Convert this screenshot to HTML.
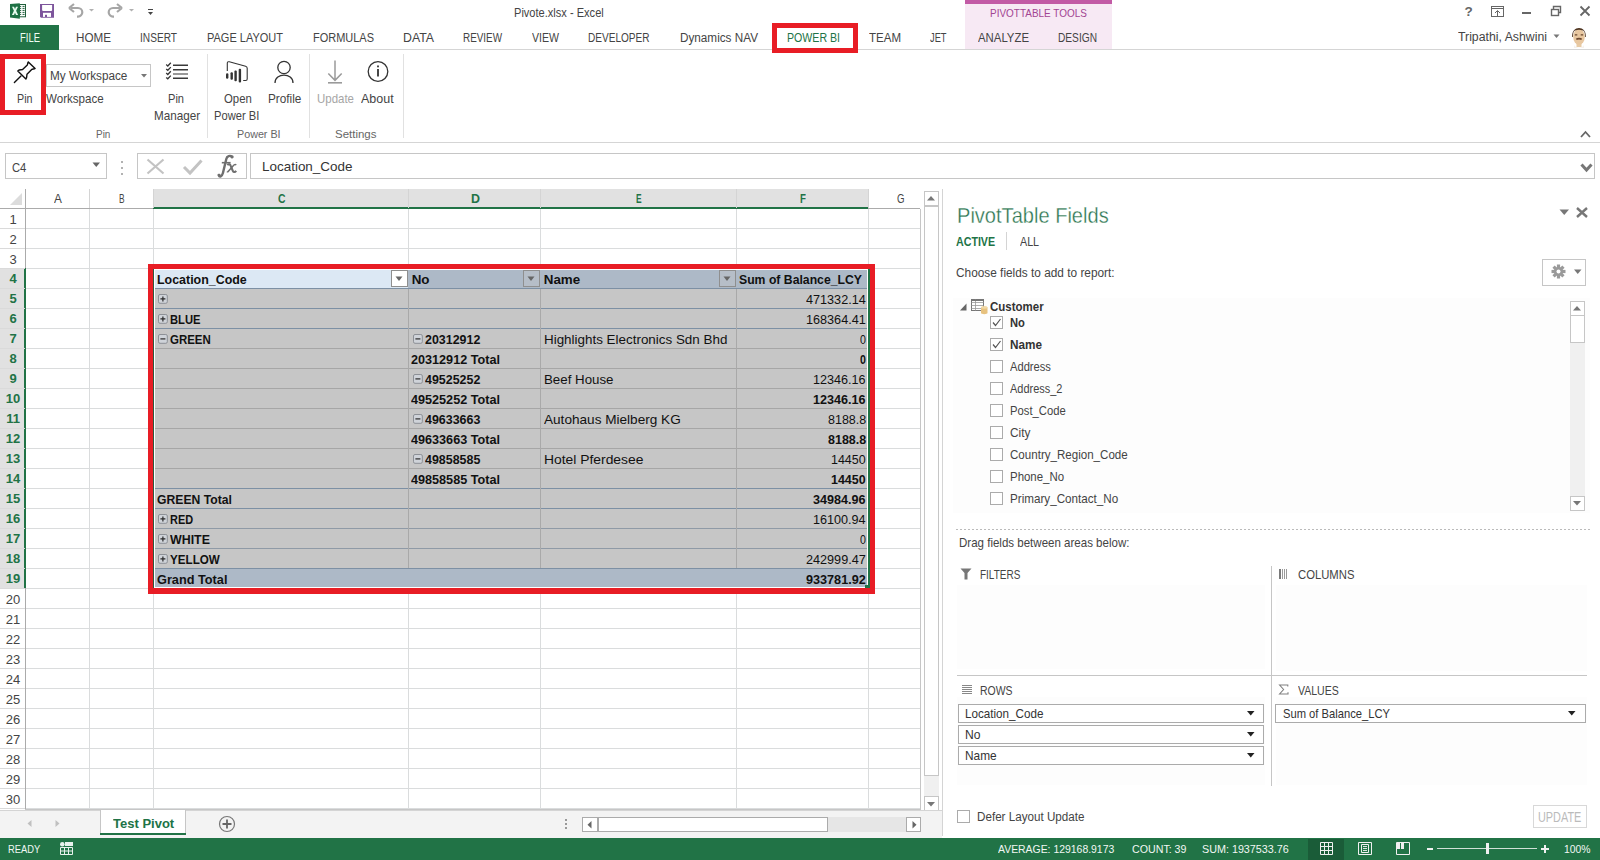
<!DOCTYPE html>
<html><head><meta charset="utf-8"><style>
html,body{margin:0;padding:0;width:1600px;height:860px;overflow:hidden;background:#fff;position:relative}
body{font-family:"Liberation Sans",sans-serif}
.t{position:absolute;white-space:nowrap;transform-origin:0 0;font-family:"Liberation Sans",sans-serif}
.r{position:absolute;display:block}
</style></head><body>
<div class="t" style="left:513.70px;top:7.00px;font-size:12.43px;line-height:12.43px;font-weight:normal;color:#444;transform:scaleX(0.8907);">Pivote.xlsx - Excel</div>
<svg class="r" style="left:9px;top:2px" width="19" height="18" viewBox="9 2 19 18">
<rect x="19.5" y="4.5" width="6" height="12.3" fill="#fff" stroke="#1f5f3b" stroke-width="1"/>
<path d="M20 6.4 H21.2 M22.5 6.4 H24.6 M20 8.4 H21.2 M22.5 8.4 H24.6 M20 10.4 H21.2 M22.5 10.4 H24.6 M20 12.4 H21.2 M22.5 12.4 H24.6 M20 14.4 H21.2 M22.5 14.4 H24.6" stroke="#1f5f3b" stroke-width="1"/>
<path d="M10 4 L19.8 3.2 V18.7 L10 17.5 Z" fill="#1e7145"/>
<path d="M12 6.7 H14 L15 8.9 L16 6.7 H18 L16.1 10.8 L18.1 14.9 H16 L15 12.7 L14 14.9 H11.9 L13.9 10.8 Z" fill="#e8fbef"/>
</svg>
<svg class="r" style="left:40px;top:4px" width="14" height="14" viewBox="40 4 14 14">
<path d="M40 4 H54 V17.8 H41 L40 16.8 Z" fill="#7d559c"/>
<path d="M42.1 5 H52.1 V10 Q52.1 11 51.1 11 H43.1 Q42.1 11 42.1 10 Z" fill="#fff"/>
<rect x="43" y="12.8" width="8" height="4.1" fill="#fff"/>
<rect x="45" y="14.8" width="2" height="2.2" fill="#7d559c"/>
</svg>
<svg class="r" style="left:68px;top:3px" width="70" height="16" viewBox="0 0 70 16">
<path d="M3 5 H10 A4.3 4.3 0 0 1 10 13.6 H9" fill="none" stroke="#a6a6a6" stroke-width="2.2"/>
<path d="M1 5 L6 1 M1 5 L6 9" fill="none" stroke="#a6a6a6" stroke-width="2.2"/>
<path d="M21 6 L26 6 L23.5 8.6 Z" fill="#b0b0b0"/>
<path d="M52 5 H45 A4.3 4.3 0 0 0 45 13.6 H46" fill="none" stroke="#a6a6a6" stroke-width="2.2"/>
<path d="M54 5 L49 1 M54 5 L49 9" fill="none" stroke="#a6a6a6" stroke-width="2.2"/>
<path d="M61 6 L66 6 L63.5 8.6 Z" fill="#b0b0b0"/>
</svg>
<svg class="r" style="left:147px;top:8px" width="8" height="8" viewBox="0 0 8 8">
<rect x="1" y="1" width="5" height="1" fill="#444"/><path d="M1 4 H6 L3.5 7 Z" fill="#444"/></svg>
<svg class="r" style="left:1460px;top:4px" width="135" height="16" viewBox="0 0 135 16">
<text x="4.5" y="12" font-family="Liberation Sans" font-weight="bold" font-size="13.5" fill="#666">?</text>
<rect x="31.5" y="2.5" width="12" height="10" fill="none" stroke="#666" stroke-width="1"/>
<path d="M31.5 4.5 H43.5" stroke="#666"/>
<path d="M37.5 12 V7 M35 9 L37.5 6.5 L40 9" fill="none" stroke="#666" stroke-width="1"/>
<rect x="62" y="8" width="9" height="2" fill="#666"/>
<rect x="91.5" y="5.5" width="7" height="6" fill="none" stroke="#666" stroke-width="1.4"/>
<path d="M93.5 5.5 V2.5 H100.5 V8.5 H98.5" fill="none" stroke="#666" stroke-width="1.4"/>
<path d="M120.5 2.5 L129.5 11.5 M129.5 2.5 L120.5 11.5" stroke="#666" stroke-width="1.8"/>
</svg>
<div class="r" style="left:0px;top:49px;width:1600px;height:1px;background:#d5d5d5"></div>
<div class="r" style="left:965px;top:0px;width:147px;height:49px;background:#f7e9f4"></div>
<div class="r" style="left:965px;top:0px;width:147px;height:4px;background:#c25aa5"></div>
<div class="t" style="left:990.00px;top:8.00px;font-size:10.90px;line-height:10.90px;font-weight:normal;color:#a24592;transform:scaleX(0.9150);">PIVOTTABLE TOOLS</div>
<div class="r" style="left:0px;top:25px;width:59px;height:25px;background:#217346"></div>
<div class="t" style="left:20.00px;top:31.00px;font-size:13.08px;line-height:13.08px;font-weight:normal;color:#f0fff4;transform:scaleX(0.7237);">FILE</div>
<div class="t" style="left:76.00px;top:31.00px;font-size:13.08px;line-height:13.08px;font-weight:normal;color:#444;transform:scaleX(0.8918);">HOME</div>
<div class="t" style="left:140.00px;top:31.00px;font-size:13.08px;line-height:13.08px;font-weight:normal;color:#444;transform:scaleX(0.7749);">INSERT</div>
<div class="t" style="left:207.00px;top:31.00px;font-size:13.08px;line-height:13.08px;font-weight:normal;color:#444;transform:scaleX(0.8408);">PAGE LAYOUT</div>
<div class="t" style="left:313.00px;top:31.00px;font-size:13.08px;line-height:13.08px;font-weight:normal;color:#444;transform:scaleX(0.8391);">FORMULAS</div>
<div class="t" style="left:403.00px;top:31.00px;font-size:13.08px;line-height:13.08px;font-weight:normal;color:#444;transform:scaleX(0.9404);">DATA</div>
<div class="t" style="left:463.00px;top:31.00px;font-size:13.08px;line-height:13.08px;font-weight:normal;color:#444;transform:scaleX(0.7557);">REVIEW</div>
<div class="t" style="left:532.00px;top:31.00px;font-size:13.08px;line-height:13.08px;font-weight:normal;color:#444;transform:scaleX(0.8078);">VIEW</div>
<div class="t" style="left:588.00px;top:31.00px;font-size:13.08px;line-height:13.08px;font-weight:normal;color:#444;transform:scaleX(0.7691);">DEVELOPER</div>
<div class="t" style="left:679.50px;top:31.00px;font-size:13.08px;line-height:13.08px;font-weight:normal;color:#444;transform:scaleX(0.8966);">Dynamics NAV</div>
<div class="t" style="left:787.00px;top:31.00px;font-size:13.08px;line-height:13.08px;font-weight:normal;color:#217346;transform:scaleX(0.8103);">POWER BI</div>
<div class="t" style="left:869.00px;top:31.00px;font-size:13.08px;line-height:13.08px;font-weight:normal;color:#444;transform:scaleX(0.8807);">TEAM</div>
<div class="t" style="left:929.50px;top:31.00px;font-size:13.08px;line-height:13.08px;font-weight:normal;color:#444;transform:scaleX(0.7096);">JET</div>
<div class="t" style="left:978.00px;top:31.00px;font-size:13.08px;line-height:13.08px;font-weight:normal;color:#444;transform:scaleX(0.8697);">ANALYZE</div>
<div class="t" style="left:1058.00px;top:31.00px;font-size:13.08px;line-height:13.08px;font-weight:normal;color:#444;transform:scaleX(0.7774);">DESIGN</div>
<div class="r" style="left:772px;top:23px;width:86px;height:30px;border:5px solid #e81d25;box-sizing:border-box"></div>
<div class="t" style="left:1458.00px;top:30.00px;font-size:13.08px;line-height:13.08px;font-weight:normal;color:#444;transform:scaleX(0.9391);">Tripathi, Ashwini</div>
<svg class="r" style="left:1553px;top:34px" width="8" height="5"><path d="M0.5 0.5 H6.5 L3.5 4 Z" fill="#777"/></svg>
<svg class="r" style="left:1570px;top:24px" width="18" height="25" viewBox="0 0 18 25">
<path d="M4 21 C6 24.5 12 24.5 14 21 L14 24 H4 Z" fill="#f6f2ee"/>
<rect x="6.5" y="18" width="5" height="5" fill="#e8cba6"/>
<ellipse cx="9" cy="12.8" rx="5.8" ry="8" fill="#e8c7a0"/>
<path d="M2.2 13 C1.2 1 16.8 1 15.8 13 L15 13 C15 9 14.5 7 13 6.5 C10 5.5 8 5.5 5 6.5 C3.5 7 3 9 3 13 Z" fill="#4e3421"/>
<path d="M4.8 10.8 H7.3 M10.7 10.8 H13.2" stroke="#6a4a30" stroke-width="1.3"/>
<path d="M6.3 15.3 C7.5 14.4 10.5 14.4 11.7 15.3" fill="none" stroke="#6e4a30" stroke-width="1.6"/>
</svg>
<div class="r" style="left:0px;top:142px;width:1600px;height:1px;background:#d5d5d5"></div>
<div class="r" style="left:207px;top:54px;width:1px;height:84px;background:#e1e1e1"></div>
<div class="r" style="left:309px;top:54px;width:1px;height:84px;background:#e1e1e1"></div>
<div class="r" style="left:403px;top:54px;width:1px;height:84px;background:#e1e1e1"></div>
<div class="r" style="left:0px;top:54px;width:46px;height:61px;border:5px solid #e81d25;box-sizing:border-box"></div>
<svg class="r" style="left:12px;top:59px" width="26" height="26" viewBox="12 59 26 26">
<path d="M14.4 82.6 L21 76" stroke="#111" stroke-width="1.4" stroke-linecap="round"/>
<path d="M17.8 70.9 C19.5 69.3 21 70 22.6 69.6 L27.3 64.9 C27.8 63.8 27.6 62.8 28.3 61.9 L35.1 68.5 C34.2 69.2 32.9 68.9 31.7 69.4 L27 74.2 C26.6 75.6 27.2 77.4 25.9 79 Z" fill="none" stroke="#111" stroke-width="1.4" stroke-linejoin="round"/>
</svg>
<div class="t" style="left:16.90px;top:93.00px;font-size:12.86px;line-height:12.86px;font-weight:normal;color:#444;transform:scaleX(0.8339);">Pin</div>
<div class="r" style="left:46px;top:64px;width:105px;height:23px;border:1px solid #c6c6c6;box-sizing:border-box;background:#fff"></div>
<div class="t" style="left:49.60px;top:69.00px;font-size:13.08px;line-height:13.08px;font-weight:normal;color:#444;transform:scaleX(0.8971);">My Workspace</div>
<svg class="r" style="left:141px;top:74px" width="6" height="4"><path d="M0 0 H6 L3 3.5 Z" fill="#777"/></svg>
<div class="t" style="left:46.40px;top:93.00px;font-size:12.86px;line-height:12.86px;font-weight:normal;color:#444;transform:scaleX(0.9003);">Workspace</div>
<svg class="r" style="left:160px;top:58px" width="32" height="26" viewBox="160 58 32 26">
<path d="M166.2 64.6 L167.8 66 L170.8 62.8 M166.2 68.9 L167.8 70.3 L170.8 67.1 M166.2 73.1 L167.8 74.5 L170.8 71.3 M166.2 77.4 L167.8 78.8 L170.8 75.6" fill="none" stroke="#333" stroke-width="1.3"/>
<path d="M173 65.3 H188 M173 69.8 H188 M173 78.3 H188" stroke="#3a3a3a" stroke-width="1.5"/>
<path d="M173 74 H188" stroke="#777" stroke-width="1.5"/>
</svg>
<div class="t" style="left:168.00px;top:93.00px;font-size:12.86px;line-height:12.86px;font-weight:normal;color:#444;transform:scaleX(0.8608);">Pin</div>
<div class="t" style="left:153.50px;top:110.00px;font-size:12.80px;line-height:12.80px;font-weight:normal;color:#444;transform:scaleX(0.9143);">Manager</div>
<div class="t" style="left:95.90px;top:129.00px;font-size:11.30px;line-height:11.30px;font-weight:normal;color:#666;transform:scaleX(0.8819);">Pin</div>
<svg class="r" style="left:222px;top:58px" width="30" height="28" viewBox="222 58 30 28">
<path d="M227.3 71 V63.3 Q227.3 61.3 229.3 61.8 L245.6 66.2 Q247.2 66.7 247.2 68.3 V79 Q247.2 80.5 245.7 80.5 H243.2" fill="none" stroke="#333" stroke-width="1.1"/>
<rect x="226" y="73.3" width="2.4" height="5.4" rx="1.2" fill="#333"/>
<rect x="230.5" y="72.2" width="2.4" height="7.5" rx="1" fill="#333"/>
<rect x="234.4" y="70.5" width="2.4" height="10.7" rx="1" fill="#333"/>
<rect x="238.7" y="68.8" width="2.4" height="13.8" rx="1" fill="#333"/>
</svg>
<div class="t" style="left:223.60px;top:93.00px;font-size:12.86px;line-height:12.86px;font-weight:normal;color:#444;transform:scaleX(0.8830);">Open</div>
<div class="t" style="left:214.40px;top:109.00px;font-size:13.08px;line-height:13.08px;font-weight:normal;color:#444;transform:scaleX(0.8535);">Power BI</div>
<svg class="r" style="left:273px;top:60px" width="22" height="24" viewBox="0 0 22 24">
<circle cx="11" cy="7.5" r="6.2" fill="none" stroke="#333" stroke-width="1.3"/>
<path d="M2 23 C2 12.5 20 12.5 20 23" fill="none" stroke="#333" stroke-width="1.3"/>
</svg>
<div class="t" style="left:267.60px;top:93.00px;font-size:12.86px;line-height:12.86px;font-weight:normal;color:#444;transform:scaleX(0.9159);">Profile</div>
<svg class="r" style="left:325px;top:58px" width="20" height="28" viewBox="325 58 20 28">
<path d="M335 60.5 V80.3 M328.3 73.4 L335 80.3 L341.7 73.4" fill="none" stroke="#9a9a9a" stroke-width="1.5"/>
<rect x="328" y="82" width="14" height="1.6" fill="#9a9a9a"/>
</svg>
<div class="t" style="left:316.80px;top:93.00px;font-size:12.86px;line-height:12.86px;font-weight:normal;color:#a6a6a6;transform:scaleX(0.8919);">Update</div>
<svg class="r" style="left:366px;top:60px" width="24" height="24" viewBox="0 0 24 24">
<circle cx="12" cy="11.5" r="9.8" fill="none" stroke="#333" stroke-width="1.3"/>
<rect x="11.1" y="9" width="1.8" height="7.5" fill="#333"/><rect x="11.1" y="5.5" width="1.8" height="1.8" fill="#333"/>
</svg>
<div class="t" style="left:361.40px;top:93.00px;font-size:12.86px;line-height:12.86px;font-weight:normal;color:#444;transform:scaleX(0.9701);">About</div>
<div class="t" style="left:236.70px;top:129.00px;font-size:11.30px;line-height:11.30px;font-weight:normal;color:#666;transform:scaleX(0.9509);">Power BI</div>
<div class="t" style="left:335.00px;top:129.00px;font-size:11.30px;line-height:11.30px;font-weight:normal;color:#666;transform:scaleX(1.0166);">Settings</div>
<svg class="r" style="left:1580px;top:130px" width="11" height="8"><path d="M1 7 L5.5 2 L10 7" fill="none" stroke="#666" stroke-width="1.8"/></svg>
<div class="r" style="left:5px;top:153px;width:102px;height:26px;border:1px solid #c6c6c6;box-sizing:border-box"></div>
<div class="t" style="left:12.25px;top:162.00px;font-size:11.99px;line-height:11.99px;font-weight:normal;color:#444;transform:scaleX(0.9367);">C4</div>
<svg class="r" style="left:92px;top:162px" width="9" height="6"><path d="M0.5 0.5 H8 L4.25 5 Z" fill="#666"/></svg>
<svg class="r" style="left:120px;top:160px" width="4" height="16"><circle cx="2" cy="2" r="1" fill="#999"/><circle cx="2" cy="8" r="1" fill="#999"/><circle cx="2" cy="14" r="1" fill="#999"/></svg>
<div class="r" style="left:137px;top:153px;width:110px;height:26px;border:1px solid #c6c6c6;box-sizing:border-box"></div>
<svg class="r" style="left:146px;top:158px" width="92" height="20" viewBox="0 0 92 20">
<path d="M1.5 1.5 L17.5 15.5 M17.5 1.5 L1.5 15.5" stroke="#c3c3c3" stroke-width="2.2"/>
<path d="M38 9 L44 15 L55.5 2.5" fill="none" stroke="#c3c3c3" stroke-width="3"/>
</svg>
<svg class="r" style="left:214px;top:152px" width="26" height="27" viewBox="214 152 26 27">
<path d="M218.6 175 C219.5 177.3 222 176.8 223 172.8 L226.3 159 C227 155.8 230 155.2 232.4 156.6" fill="none" stroke="#6f6f6f" stroke-width="2.4" stroke-linecap="round"/>
<circle cx="219.3" cy="175" r="1.3" fill="#6f6f6f"/><circle cx="232" cy="157.2" r="1.3" fill="#6f6f6f"/>
<path d="M221.8 162.7 H230.6" stroke="#6f6f6f" stroke-width="1.6"/>
<path d="M227.3 165 C229 163.5 230.2 164.2 231 166.5 L232.8 170.8 C233.6 172.6 235 172.3 236.2 170.8" fill="none" stroke="#6f6f6f" stroke-width="2.1"/>
<path d="M236.3 165 C235 164 234 164.8 233 166 L228.6 171 C228 171.8 227.5 172 227 171.5" fill="none" stroke="#6f6f6f" stroke-width="1.5"/>
</svg>
<div class="r" style="left:250px;top:153px;width:1345px;height:26px;border:1px solid #c6c6c6;box-sizing:border-box"></div>
<div class="t" style="left:262.00px;top:160.00px;font-size:13.44px;line-height:13.44px;font-weight:normal;color:#333;transform:scaleX(1.0005);">Location_Code</div>
<svg class="r" style="left:1580px;top:163px" width="13" height="10"><path d="M1.5 1.5 L6.5 7 L11.5 1.5" fill="none" stroke="#777" stroke-width="3"/></svg>
<div class="r" style="left:153px;top:189px;width:715px;height:18px;background:#e1e1e1"></div>
<div class="r" style="left:153px;top:207px;width:715px;height:2px;background:#217346"></div>
<div class="r" style="left:0px;top:208px;width:153px;height:1px;background:#ababab"></div>
<div class="r" style="left:868px;top:208px;width:52px;height:1px;background:#ababab"></div>
<div class="r" style="left:25px;top:228px;width:895px;height:1px;background:#dadcdd"></div>
<div class="r" style="left:25px;top:248px;width:895px;height:1px;background:#dadcdd"></div>
<div class="r" style="left:25px;top:268px;width:895px;height:1px;background:#dadcdd"></div>
<div class="r" style="left:25px;top:288px;width:895px;height:1px;background:#dadcdd"></div>
<div class="r" style="left:25px;top:308px;width:895px;height:1px;background:#dadcdd"></div>
<div class="r" style="left:25px;top:328px;width:895px;height:1px;background:#dadcdd"></div>
<div class="r" style="left:25px;top:348px;width:895px;height:1px;background:#dadcdd"></div>
<div class="r" style="left:25px;top:368px;width:895px;height:1px;background:#dadcdd"></div>
<div class="r" style="left:25px;top:388px;width:895px;height:1px;background:#dadcdd"></div>
<div class="r" style="left:25px;top:408px;width:895px;height:1px;background:#dadcdd"></div>
<div class="r" style="left:25px;top:428px;width:895px;height:1px;background:#dadcdd"></div>
<div class="r" style="left:25px;top:448px;width:895px;height:1px;background:#dadcdd"></div>
<div class="r" style="left:25px;top:468px;width:895px;height:1px;background:#dadcdd"></div>
<div class="r" style="left:25px;top:488px;width:895px;height:1px;background:#dadcdd"></div>
<div class="r" style="left:25px;top:508px;width:895px;height:1px;background:#dadcdd"></div>
<div class="r" style="left:25px;top:528px;width:895px;height:1px;background:#dadcdd"></div>
<div class="r" style="left:25px;top:548px;width:895px;height:1px;background:#dadcdd"></div>
<div class="r" style="left:25px;top:568px;width:895px;height:1px;background:#dadcdd"></div>
<div class="r" style="left:25px;top:588px;width:895px;height:1px;background:#dadcdd"></div>
<div class="r" style="left:25px;top:608px;width:895px;height:1px;background:#dadcdd"></div>
<div class="r" style="left:25px;top:628px;width:895px;height:1px;background:#dadcdd"></div>
<div class="r" style="left:25px;top:648px;width:895px;height:1px;background:#dadcdd"></div>
<div class="r" style="left:25px;top:668px;width:895px;height:1px;background:#dadcdd"></div>
<div class="r" style="left:25px;top:688px;width:895px;height:1px;background:#dadcdd"></div>
<div class="r" style="left:25px;top:708px;width:895px;height:1px;background:#dadcdd"></div>
<div class="r" style="left:25px;top:728px;width:895px;height:1px;background:#dadcdd"></div>
<div class="r" style="left:25px;top:748px;width:895px;height:1px;background:#dadcdd"></div>
<div class="r" style="left:25px;top:768px;width:895px;height:1px;background:#dadcdd"></div>
<div class="r" style="left:25px;top:788px;width:895px;height:1px;background:#dadcdd"></div>
<div class="r" style="left:25px;top:808px;width:895px;height:1px;background:#dadcdd"></div>
<div class="r" style="left:89px;top:189px;width:1px;height:19px;background:#d4d4d4"></div>
<div class="r" style="left:89px;top:209px;width:1px;height:600px;background:#dadcdd"></div>
<div class="r" style="left:153px;top:189px;width:1px;height:19px;background:#d4d4d4"></div>
<div class="r" style="left:153px;top:209px;width:1px;height:600px;background:#dadcdd"></div>
<div class="r" style="left:408px;top:189px;width:1px;height:19px;background:#d4d4d4"></div>
<div class="r" style="left:408px;top:209px;width:1px;height:600px;background:#dadcdd"></div>
<div class="r" style="left:540px;top:189px;width:1px;height:19px;background:#d4d4d4"></div>
<div class="r" style="left:540px;top:209px;width:1px;height:600px;background:#dadcdd"></div>
<div class="r" style="left:736px;top:189px;width:1px;height:19px;background:#d4d4d4"></div>
<div class="r" style="left:736px;top:209px;width:1px;height:600px;background:#dadcdd"></div>
<div class="r" style="left:868px;top:189px;width:1px;height:19px;background:#d4d4d4"></div>
<div class="r" style="left:868px;top:209px;width:1px;height:600px;background:#dadcdd"></div>
<div class="r" style="left:920px;top:209px;width:1px;height:601px;background:#c6c6c6"></div>
<div class="r" style="left:25px;top:809px;width:896px;height:1px;background:#c6c6c6"></div>
<div class="r" style="left:0px;top:268px;width:25px;height:320px;background:#e1e1e1"></div>
<div class="r" style="left:25px;top:189px;width:1px;height:620px;background:#ababab"></div>
<div class="r" style="left:24px;top:268px;width:2px;height:320px;background:#217346"></div>
<div class="r" style="left:0px;top:228px;width:25px;height:1px;background:#dadada"></div>
<div class="r" style="left:0px;top:248px;width:25px;height:1px;background:#dadada"></div>
<div class="r" style="left:0px;top:268px;width:25px;height:1px;background:#dadada"></div>
<div class="r" style="left:0px;top:288px;width:25px;height:1px;background:#dadada"></div>
<div class="r" style="left:0px;top:308px;width:25px;height:1px;background:#dadada"></div>
<div class="r" style="left:0px;top:328px;width:25px;height:1px;background:#dadada"></div>
<div class="r" style="left:0px;top:348px;width:25px;height:1px;background:#dadada"></div>
<div class="r" style="left:0px;top:368px;width:25px;height:1px;background:#dadada"></div>
<div class="r" style="left:0px;top:388px;width:25px;height:1px;background:#dadada"></div>
<div class="r" style="left:0px;top:408px;width:25px;height:1px;background:#dadada"></div>
<div class="r" style="left:0px;top:428px;width:25px;height:1px;background:#dadada"></div>
<div class="r" style="left:0px;top:448px;width:25px;height:1px;background:#dadada"></div>
<div class="r" style="left:0px;top:468px;width:25px;height:1px;background:#dadada"></div>
<div class="r" style="left:0px;top:488px;width:25px;height:1px;background:#dadada"></div>
<div class="r" style="left:0px;top:508px;width:25px;height:1px;background:#dadada"></div>
<div class="r" style="left:0px;top:528px;width:25px;height:1px;background:#dadada"></div>
<div class="r" style="left:0px;top:548px;width:25px;height:1px;background:#dadada"></div>
<div class="r" style="left:0px;top:568px;width:25px;height:1px;background:#dadada"></div>
<div class="r" style="left:0px;top:588px;width:25px;height:1px;background:#dadada"></div>
<div class="r" style="left:0px;top:608px;width:25px;height:1px;background:#dadada"></div>
<div class="r" style="left:0px;top:628px;width:25px;height:1px;background:#dadada"></div>
<div class="r" style="left:0px;top:648px;width:25px;height:1px;background:#dadada"></div>
<div class="r" style="left:0px;top:668px;width:25px;height:1px;background:#dadada"></div>
<div class="r" style="left:0px;top:688px;width:25px;height:1px;background:#dadada"></div>
<div class="r" style="left:0px;top:708px;width:25px;height:1px;background:#dadada"></div>
<div class="r" style="left:0px;top:728px;width:25px;height:1px;background:#dadada"></div>
<div class="r" style="left:0px;top:748px;width:25px;height:1px;background:#dadada"></div>
<div class="r" style="left:0px;top:768px;width:25px;height:1px;background:#dadada"></div>
<div class="r" style="left:0px;top:788px;width:25px;height:1px;background:#dadada"></div>
<div class="r" style="left:0px;top:808px;width:25px;height:1px;background:#dadada"></div>
<svg class="r" style="left:10px;top:193px" width="13" height="12"><path d="M12 0 V12 H0 Z" fill="#dcdcdc"/></svg>
<div class="t" style="left:54.00px;top:192.00px;font-size:13.00px;line-height:13.00px;font-weight:normal;color:#444;transform:scaleX(0.9104);">A</div>
<div class="t" style="left:118.70px;top:192.00px;font-size:13.00px;line-height:13.00px;font-weight:normal;color:#444;transform:scaleX(0.6453);">B</div>
<div class="t" style="left:277.50px;top:192.00px;font-size:13.00px;line-height:13.00px;font-weight:bold;color:#217346;transform:scaleX(0.7985);">C</div>
<div class="t" style="left:471.00px;top:192.00px;font-size:13.00px;line-height:13.00px;font-weight:bold;color:#217346;transform:scaleX(0.9582);">D</div>
<div class="t" style="left:636.00px;top:192.00px;font-size:13.00px;line-height:13.00px;font-weight:bold;color:#217346;transform:scaleX(0.6453);">E</div>
<div class="t" style="left:800.00px;top:192.00px;font-size:13.00px;line-height:13.00px;font-weight:bold;color:#217346;transform:scaleX(0.7440);">F</div>
<div class="t" style="left:897.00px;top:192.00px;font-size:13.00px;line-height:13.00px;font-weight:normal;color:#444;transform:scaleX(0.7420);">G</div>
<div class="t" style="left:0.5px;top:210px;width:25px;text-align:center;font-size:13px;line-height:20px;color:#444;font-weight:normal">1</div>
<div class="t" style="left:0.5px;top:230px;width:25px;text-align:center;font-size:13px;line-height:20px;color:#444;font-weight:normal">2</div>
<div class="t" style="left:0.5px;top:250px;width:25px;text-align:center;font-size:13px;line-height:20px;color:#444;font-weight:normal">3</div>
<div class="t" style="left:0.5px;top:269px;width:25px;text-align:center;font-size:13px;line-height:20px;color:#217346;font-weight:bold">4</div>
<div class="t" style="left:0.5px;top:289px;width:25px;text-align:center;font-size:13px;line-height:20px;color:#217346;font-weight:bold">5</div>
<div class="t" style="left:0.5px;top:309px;width:25px;text-align:center;font-size:13px;line-height:20px;color:#217346;font-weight:bold">6</div>
<div class="t" style="left:0.5px;top:329px;width:25px;text-align:center;font-size:13px;line-height:20px;color:#217346;font-weight:bold">7</div>
<div class="t" style="left:0.5px;top:349px;width:25px;text-align:center;font-size:13px;line-height:20px;color:#217346;font-weight:bold">8</div>
<div class="t" style="left:0.5px;top:369px;width:25px;text-align:center;font-size:13px;line-height:20px;color:#217346;font-weight:bold">9</div>
<div class="t" style="left:0.5px;top:389px;width:25px;text-align:center;font-size:13px;line-height:20px;color:#217346;font-weight:bold">10</div>
<div class="t" style="left:0.5px;top:409px;width:25px;text-align:center;font-size:13px;line-height:20px;color:#217346;font-weight:bold">11</div>
<div class="t" style="left:0.5px;top:429px;width:25px;text-align:center;font-size:13px;line-height:20px;color:#217346;font-weight:bold">12</div>
<div class="t" style="left:0.5px;top:449px;width:25px;text-align:center;font-size:13px;line-height:20px;color:#217346;font-weight:bold">13</div>
<div class="t" style="left:0.5px;top:469px;width:25px;text-align:center;font-size:13px;line-height:20px;color:#217346;font-weight:bold">14</div>
<div class="t" style="left:0.5px;top:489px;width:25px;text-align:center;font-size:13px;line-height:20px;color:#217346;font-weight:bold">15</div>
<div class="t" style="left:0.5px;top:509px;width:25px;text-align:center;font-size:13px;line-height:20px;color:#217346;font-weight:bold">16</div>
<div class="t" style="left:0.5px;top:529px;width:25px;text-align:center;font-size:13px;line-height:20px;color:#217346;font-weight:bold">17</div>
<div class="t" style="left:0.5px;top:549px;width:25px;text-align:center;font-size:13px;line-height:20px;color:#217346;font-weight:bold">18</div>
<div class="t" style="left:0.5px;top:569px;width:25px;text-align:center;font-size:13px;line-height:20px;color:#217346;font-weight:bold">19</div>
<div class="t" style="left:0.5px;top:590px;width:25px;text-align:center;font-size:13px;line-height:20px;color:#444;font-weight:normal">20</div>
<div class="t" style="left:0.5px;top:610px;width:25px;text-align:center;font-size:13px;line-height:20px;color:#444;font-weight:normal">21</div>
<div class="t" style="left:0.5px;top:630px;width:25px;text-align:center;font-size:13px;line-height:20px;color:#444;font-weight:normal">22</div>
<div class="t" style="left:0.5px;top:650px;width:25px;text-align:center;font-size:13px;line-height:20px;color:#444;font-weight:normal">23</div>
<div class="t" style="left:0.5px;top:670px;width:25px;text-align:center;font-size:13px;line-height:20px;color:#444;font-weight:normal">24</div>
<div class="t" style="left:0.5px;top:690px;width:25px;text-align:center;font-size:13px;line-height:20px;color:#444;font-weight:normal">25</div>
<div class="t" style="left:0.5px;top:710px;width:25px;text-align:center;font-size:13px;line-height:20px;color:#444;font-weight:normal">26</div>
<div class="t" style="left:0.5px;top:730px;width:25px;text-align:center;font-size:13px;line-height:20px;color:#444;font-weight:normal">27</div>
<div class="t" style="left:0.5px;top:750px;width:25px;text-align:center;font-size:13px;line-height:20px;color:#444;font-weight:normal">28</div>
<div class="t" style="left:0.5px;top:770px;width:25px;text-align:center;font-size:13px;line-height:20px;color:#444;font-weight:normal">29</div>
<div class="t" style="left:0.5px;top:790px;width:25px;text-align:center;font-size:13px;line-height:20px;color:#444;font-weight:normal">30</div>
<div class="r" style="left:153px;top:269px;width:715px;height:319px;background:#c6c6c6"></div>
<div class="r" style="left:408px;top:269px;width:460px;height:19px;background:#adb9c7"></div>
<div class="r" style="left:153px;top:269px;width:255px;height:19px;background:#dce8f4"></div>
<div class="r" style="left:153px;top:569px;width:715px;height:18px;background:#adb9c7"></div>
<div class="r" style="left:153px;top:528px;width:714px;height:1px;background:#8f9aa6"></div>
<div class="r" style="left:153px;top:548px;width:714px;height:1px;background:#8f9aa6"></div>
<div class="r" style="left:153px;top:288px;width:714px;height:1px;background:#7d90a4"></div>
<div class="r" style="left:153px;top:308px;width:714px;height:1px;background:#7d90a4"></div>
<div class="r" style="left:153px;top:328px;width:714px;height:1px;background:#7d90a4"></div>
<div class="r" style="left:153px;top:488px;width:714px;height:1px;background:#7d90a4"></div>
<div class="r" style="left:153px;top:508px;width:714px;height:1px;background:#7d90a4"></div>
<div class="r" style="left:153px;top:568px;width:714px;height:1px;background:#7d90a4"></div>
<div class="r" style="left:153px;top:348px;width:714px;height:1px;background:#a6a6a6"></div>
<div class="r" style="left:153px;top:368px;width:714px;height:1px;background:#a6a6a6"></div>
<div class="r" style="left:153px;top:388px;width:714px;height:1px;background:#a6a6a6"></div>
<div class="r" style="left:153px;top:408px;width:714px;height:1px;background:#a6a6a6"></div>
<div class="r" style="left:153px;top:428px;width:714px;height:1px;background:#a6a6a6"></div>
<div class="r" style="left:153px;top:448px;width:714px;height:1px;background:#a6a6a6"></div>
<div class="r" style="left:153px;top:468px;width:714px;height:1px;background:#a6a6a6"></div>
<div class="r" style="left:408px;top:289px;width:1px;height:279px;background:#a9a9a9"></div>
<div class="r" style="left:540px;top:289px;width:1px;height:279px;background:#a9a9a9"></div>
<div class="r" style="left:736px;top:289px;width:1px;height:279px;background:#a9a9a9"></div>
<div class="r" style="left:867px;top:269px;width:1px;height:319px;background:#fff"></div>
<div class="r" style="left:153px;top:587px;width:715px;height:1px;background:#fff"></div>
<div class="r" style="left:868px;top:269px;width:2px;height:320px;background:#217346"></div>
<div class="r" style="left:153px;top:269px;width:1px;height:319px;background:#2d5a3f"></div>
<div class="r" style="left:154px;top:269px;width:1px;height:318px;background:#fff"></div>
<div class="r" style="left:154px;top:269px;width:713px;height:1px;background:#fff"></div>
<div class="r" style="left:865px;top:585px;width:5px;height:4px;background:#217346"></div>
<div class="r" style="left:391px;top:270px;width:17px;height:17px;border:1px solid #8f8f8f;box-sizing:border-box;background:#fff"></div>
<svg class="r" style="left:395px;top:276px" width="8" height="6"><path d="M0.5 0.5 H7.5 L4 5 Z" fill="#666"/></svg>
<div class="r" style="left:523px;top:270px;width:17px;height:17px;border:1px solid #8f8f8f;box-sizing:border-box;background:#b6bec8"></div>
<svg class="r" style="left:527px;top:276px" width="8" height="6"><path d="M0.5 0.5 H7.5 L4 5 Z" fill="#666"/></svg>
<div class="r" style="left:719px;top:270px;width:17px;height:17px;border:1px solid #8f8f8f;box-sizing:border-box;background:#b6bec8"></div>
<svg class="r" style="left:723px;top:276px" width="8" height="6"><path d="M0.5 0.5 H7.5 L4 5 Z" fill="#666"/></svg>
<div class="t" style="left:156.50px;top:273.00px;font-size:13.40px;line-height:13.40px;font-weight:bold;color:#111;transform:scaleX(0.9279);">Location_Code</div>
<div class="t" style="left:411.70px;top:273.00px;font-size:13.40px;line-height:13.40px;font-weight:bold;color:#111;transform:scaleX(1.0000);">No</div>
<div class="t" style="left:543.75px;top:273.00px;font-size:13.40px;line-height:13.40px;font-weight:bold;color:#111;transform:scaleX(1.0000);">Name</div>
<div class="t" style="left:739.00px;top:273.00px;font-size:13.40px;line-height:13.40px;font-weight:bold;color:#111;transform:scaleX(0.9127);">Sum of Balance_LCY</div>
<svg class="r" style="left:158px;top:294px" width="10" height="10" viewBox="0 0 10 10"><rect x="0.5" y="0.5" width="8.8" height="8.8" rx="1.5" fill="#cfd3d9" stroke="#8d9096" stroke-width="1"/><path d="M2.4 4.9 H7.4 M4.9 2.4 V7.4" stroke="#2a2a2a" stroke-width="1.2"/></svg>
<svg class="r" style="left:158px;top:314px" width="10" height="10" viewBox="0 0 10 10"><rect x="0.5" y="0.5" width="8.8" height="8.8" rx="1.5" fill="#cfd3d9" stroke="#8d9096" stroke-width="1"/><path d="M2.4 4.9 H7.4 M4.9 2.4 V7.4" stroke="#2a2a2a" stroke-width="1.2"/></svg>
<div class="t" style="left:169.50px;top:313.00px;font-size:13.40px;line-height:13.40px;font-weight:bold;color:#111;transform:scaleX(0.8360);">BLUE</div>
<svg class="r" style="left:158px;top:334px" width="10" height="10" viewBox="0 0 10 10"><rect x="0.5" y="0.5" width="8.8" height="8.8" rx="1.5" fill="#cfd3d9" stroke="#8d9096" stroke-width="1"/><path d="M2.4 4.9 H7.4" stroke="#2a2a2a" stroke-width="1.2"/></svg>
<div class="t" style="left:169.50px;top:333.00px;font-size:13.40px;line-height:13.40px;font-weight:bold;color:#111;transform:scaleX(0.8565);">GREEN</div>
<div class="t" style="left:156.50px;top:493.00px;font-size:13.40px;line-height:13.40px;font-weight:bold;color:#111;transform:scaleX(0.9092);">GREEN Total</div>
<svg class="r" style="left:158px;top:514px" width="10" height="10" viewBox="0 0 10 10"><rect x="0.5" y="0.5" width="8.8" height="8.8" rx="1.5" fill="#cfd3d9" stroke="#8d9096" stroke-width="1"/><path d="M2.4 4.9 H7.4 M4.9 2.4 V7.4" stroke="#2a2a2a" stroke-width="1.2"/></svg>
<div class="t" style="left:169.50px;top:513.00px;font-size:13.40px;line-height:13.40px;font-weight:bold;color:#111;transform:scaleX(0.8160);">RED</div>
<svg class="r" style="left:158px;top:534px" width="10" height="10" viewBox="0 0 10 10"><rect x="0.5" y="0.5" width="8.8" height="8.8" rx="1.5" fill="#cfd3d9" stroke="#8d9096" stroke-width="1"/><path d="M2.4 4.9 H7.4 M4.9 2.4 V7.4" stroke="#2a2a2a" stroke-width="1.2"/></svg>
<div class="t" style="left:169.50px;top:533.00px;font-size:13.40px;line-height:13.40px;font-weight:bold;color:#111;transform:scaleX(0.9263);">WHITE</div>
<svg class="r" style="left:158px;top:554px" width="10" height="10" viewBox="0 0 10 10"><rect x="0.5" y="0.5" width="8.8" height="8.8" rx="1.5" fill="#cfd3d9" stroke="#8d9096" stroke-width="1"/><path d="M2.4 4.9 H7.4 M4.9 2.4 V7.4" stroke="#2a2a2a" stroke-width="1.2"/></svg>
<div class="t" style="left:169.50px;top:553.00px;font-size:13.40px;line-height:13.40px;font-weight:bold;color:#111;transform:scaleX(0.8688);">YELLOW</div>
<div class="t" style="left:156.50px;top:573.00px;font-size:13.40px;line-height:13.40px;font-weight:bold;color:#111;transform:scaleX(0.9501);">Grand Total</div>
<svg class="r" style="left:413px;top:334px" width="10" height="10" viewBox="0 0 10 10"><rect x="0.5" y="0.5" width="8.8" height="8.8" rx="1.5" fill="#cfd3d9" stroke="#8d9096" stroke-width="1"/><path d="M2.4 4.9 H7.4" stroke="#2a2a2a" stroke-width="1.2"/></svg>
<div class="t" style="left:424.50px;top:333.00px;font-size:13.40px;line-height:13.40px;font-weight:bold;color:#111;transform:scaleX(0.9291);">20312912</div>
<div class="t" style="left:411.30px;top:353.00px;font-size:13.40px;line-height:13.40px;font-weight:bold;color:#111;transform:scaleX(0.9431);">20312912 Total</div>
<svg class="r" style="left:413px;top:374px" width="10" height="10" viewBox="0 0 10 10"><rect x="0.5" y="0.5" width="8.8" height="8.8" rx="1.5" fill="#cfd3d9" stroke="#8d9096" stroke-width="1"/><path d="M2.4 4.9 H7.4" stroke="#2a2a2a" stroke-width="1.2"/></svg>
<div class="t" style="left:424.50px;top:373.00px;font-size:13.40px;line-height:13.40px;font-weight:bold;color:#111;transform:scaleX(0.9291);">49525252</div>
<div class="t" style="left:411.30px;top:393.00px;font-size:13.40px;line-height:13.40px;font-weight:bold;color:#111;transform:scaleX(0.9431);">49525252 Total</div>
<svg class="r" style="left:413px;top:414px" width="10" height="10" viewBox="0 0 10 10"><rect x="0.5" y="0.5" width="8.8" height="8.8" rx="1.5" fill="#cfd3d9" stroke="#8d9096" stroke-width="1"/><path d="M2.4 4.9 H7.4" stroke="#2a2a2a" stroke-width="1.2"/></svg>
<div class="t" style="left:424.50px;top:413.00px;font-size:13.40px;line-height:13.40px;font-weight:bold;color:#111;transform:scaleX(0.9291);">49633663</div>
<div class="t" style="left:411.30px;top:433.00px;font-size:13.40px;line-height:13.40px;font-weight:bold;color:#111;transform:scaleX(0.9431);">49633663 Total</div>
<svg class="r" style="left:413px;top:454px" width="10" height="10" viewBox="0 0 10 10"><rect x="0.5" y="0.5" width="8.8" height="8.8" rx="1.5" fill="#cfd3d9" stroke="#8d9096" stroke-width="1"/><path d="M2.4 4.9 H7.4" stroke="#2a2a2a" stroke-width="1.2"/></svg>
<div class="t" style="left:424.50px;top:453.00px;font-size:13.40px;line-height:13.40px;font-weight:bold;color:#111;transform:scaleX(0.9291);">49858585</div>
<div class="t" style="left:411.30px;top:473.00px;font-size:13.40px;line-height:13.40px;font-weight:bold;color:#111;transform:scaleX(0.9431);">49858585 Total</div>
<div class="t" style="left:543.75px;top:333.00px;font-size:13.40px;line-height:13.40px;font-weight:normal;color:#111;transform:scaleX(1.0014);">Highlights Electronics Sdn Bhd</div>
<div class="t" style="left:543.75px;top:373.00px;font-size:13.40px;line-height:13.40px;font-weight:normal;color:#111;transform:scaleX(0.9926);">Beef House</div>
<div class="t" style="left:543.75px;top:413.00px;font-size:13.40px;line-height:13.40px;font-weight:normal;color:#111;transform:scaleX(1.0149);">Autohaus Mielberg KG</div>
<div class="t" style="left:543.75px;top:453.00px;font-size:13.40px;line-height:13.40px;font-weight:normal;color:#111;transform:scaleX(1.0356);">Hotel Pferdesee</div>
<div class="t" style="left:805.90px;top:293.00px;font-size:13.40px;line-height:13.40px;font-weight:normal;color:#111;transform:scaleX(0.9440);">471332.14</div>
<div class="t" style="left:805.90px;top:313.00px;font-size:13.40px;line-height:13.40px;font-weight:normal;color:#111;transform:scaleX(0.9440);">168364.41</div>
<div class="t" style="left:859.80px;top:333.00px;font-size:13.40px;line-height:13.40px;font-weight:normal;color:#111;transform:scaleX(0.7933);">0</div>
<div class="t" style="left:859.80px;top:353.00px;font-size:13.40px;line-height:13.40px;font-weight:bold;color:#111;transform:scaleX(0.7933);">0</div>
<div class="t" style="left:813.10px;top:373.00px;font-size:13.40px;line-height:13.40px;font-weight:normal;color:#111;transform:scaleX(0.9413);">12346.16</div>
<div class="t" style="left:813.10px;top:393.00px;font-size:13.40px;line-height:13.40px;font-weight:bold;color:#111;transform:scaleX(0.9413);">12346.16</div>
<div class="t" style="left:827.50px;top:413.00px;font-size:13.40px;line-height:13.40px;font-weight:normal;color:#111;transform:scaleX(0.9324);">8188.8</div>
<div class="t" style="left:827.50px;top:433.00px;font-size:13.40px;line-height:13.40px;font-weight:bold;color:#111;transform:scaleX(0.9324);">8188.8</div>
<div class="t" style="left:831.00px;top:453.00px;font-size:13.40px;line-height:13.40px;font-weight:normal;color:#111;transform:scaleX(0.9315);">14450</div>
<div class="t" style="left:831.00px;top:473.00px;font-size:13.40px;line-height:13.40px;font-weight:bold;color:#111;transform:scaleX(0.9315);">14450</div>
<div class="t" style="left:813.10px;top:493.00px;font-size:13.40px;line-height:13.40px;font-weight:bold;color:#111;transform:scaleX(0.9413);">34984.96</div>
<div class="t" style="left:813.10px;top:513.00px;font-size:13.40px;line-height:13.40px;font-weight:normal;color:#111;transform:scaleX(0.9413);">16100.94</div>
<div class="t" style="left:859.80px;top:533.00px;font-size:13.40px;line-height:13.40px;font-weight:normal;color:#111;transform:scaleX(0.7933);">0</div>
<div class="t" style="left:805.90px;top:553.00px;font-size:13.40px;line-height:13.40px;font-weight:normal;color:#111;transform:scaleX(0.9440);">242999.47</div>
<div class="t" style="left:805.90px;top:573.00px;font-size:13.40px;line-height:13.40px;font-weight:bold;color:#111;transform:scaleX(0.9440);">933781.92</div>
<div class="r" style="left:148px;top:264px;width:727px;height:330px;border:5px solid #e81d25;border-bottom-width:6px;box-sizing:border-box"></div>
<div class="r" style="left:921px;top:189px;width:21px;height:649px;background:#fff"></div>
<div class="r" style="left:924px;top:191px;width:15px;height:620px;background:#f0f0f0"></div>
<div class="r" style="left:924px;top:191px;width:15px;height:15px;border:1px solid #c6c6c6;box-sizing:border-box;background:#fff"></div>
<svg class="r" style="left:927px;top:196px" width="9" height="5"><path d="M0 4.5 H8 L4 0 Z" fill="#777"/></svg>
<div class="r" style="left:924px;top:206px;width:15px;height:570px;border:1px solid #c6c6c6;box-sizing:border-box;background:#fff"></div>
<div class="r" style="left:924px;top:796px;width:15px;height:15px;border:1px solid #c6c6c6;box-sizing:border-box;background:#fff"></div>
<svg class="r" style="left:927px;top:802px" width="9" height="5"><path d="M0 0 H8 L4 4.5 Z" fill="#777"/></svg>
<div class="r" style="left:0px;top:810px;width:942px;height:28px;background:#f3f3f3"></div>
<div class="r" style="left:0px;top:810px;width:942px;height:1px;background:#d4d4d4"></div>
<div class="r" style="left:100px;top:810px;width:86px;height:25px;background:#fff;border-left:1px solid #c6c6c6;border-right:1px solid #c6c6c6;box-sizing:border-box"></div>
<div class="r" style="left:100px;top:833px;width:86px;height:2px;background:#217346"></div>
<div class="t" style="left:113.00px;top:817.00px;font-size:13.52px;line-height:13.52px;font-weight:bold;color:#217346;transform:scaleX(0.9623);">Test Pivot</div>
<svg class="r" style="left:27px;top:820px" width="40" height="8"><path d="M4.5 0 V7 L0.5 3.5 Z M28.5 0 V7 L32.5 3.5 Z" fill="#c0c0c0"/></svg>
<svg class="r" style="left:218px;top:815px" width="18" height="18" viewBox="0 0 18 18">
<circle cx="9" cy="9" r="7.5" fill="none" stroke="#777" stroke-width="1.2"/>
<path d="M9 4.5 V13.5 M4.5 9 H13.5" stroke="#666" stroke-width="1.8"/></svg>
<svg class="r" style="left:564px;top:816px" width="4" height="16"><rect x="1" y="3" width="2" height="2" fill="#999"/><rect x="1" y="7" width="2" height="2" fill="#999"/><rect x="1" y="11" width="2" height="2" fill="#999"/></svg>
<div class="r" style="left:582px;top:817px;width:339px;height:15px;background:#e6e6e6"></div>
<div class="r" style="left:582px;top:817px;width:16px;height:15px;border:1px solid #ababab;box-sizing:border-box;background:#fff"></div>
<svg class="r" style="left:587px;top:821px" width="5" height="8"><path d="M4.5 0 V7.5 L0.5 3.75 Z" fill="#666"/></svg>
<div class="r" style="left:597px;top:817px;width:231px;height:15px;border:1px solid #ababab;border-left:2px solid #ababab;box-sizing:border-box;background:#fff"></div>
<div class="r" style="left:906px;top:817px;width:15px;height:15px;border:1px solid #ababab;box-sizing:border-box;background:#fff"></div>
<svg class="r" style="left:912px;top:821px" width="5" height="8"><path d="M0.5 0 V7.5 L4.5 3.75 Z" fill="#666"/></svg>
<div class="r" style="left:0px;top:838px;width:1600px;height:22px;background:#217346"></div>
<div class="t" style="left:7.60px;top:844.00px;font-size:11.19px;line-height:11.19px;font-weight:normal;color:#f2f7f4;transform:scaleX(0.8351);">READY</div>
<svg class="r" style="left:59px;top:841px" width="16" height="15" viewBox="59 841 16 15">
<circle cx="62.3" cy="844.2" r="2.3" fill="#e8f1ec"/>
<rect x="65" y="842" width="8" height="4" fill="#e8f1ec"/>
<path d="M60.5 847.5 H72.5 V854.5 H60.5 Z M60.5 851 H72.5 M64.5 847.5 V854.5 M68.5 847.5 V854.5" fill="none" stroke="#e8f1ec" stroke-width="1"/>
</svg>
<div class="t" style="left:998.10px;top:844.00px;font-size:11.19px;line-height:11.19px;font-weight:normal;color:#f2f7f4;transform:scaleX(0.9315);">AVERAGE: 129168.9173</div>
<div class="t" style="left:1131.50px;top:844.00px;font-size:11.19px;line-height:11.19px;font-weight:normal;color:#f2f7f4;transform:scaleX(0.9525);">COUNT: 39</div>
<div class="t" style="left:1202.20px;top:844.00px;font-size:11.19px;line-height:11.19px;font-weight:normal;color:#f2f7f4;transform:scaleX(0.9619);">SUM: 1937533.76</div>
<div class="r" style="left:1308px;top:839px;width:36px;height:21px;background:#1a5c38"></div>
<svg class="r" style="left:1319px;top:842px" width="100" height="15" viewBox="0 0 100 15">
<path d="M1.5 0.5 H13.5 V12.5 H1.5 Z M5.5 0.5 V12.5 M9.5 0.5 V12.5 M1.5 4.5 H13.5 M1.5 8.5 H13.5" fill="none" stroke="#f0f0f0" stroke-width="1"/>
<path d="M39.5 0.5 H52.5 V12.5 H39.5 Z" fill="none" stroke="#f0f0f0" stroke-width="1"/>
<path d="M42.5 2.5 H49.5 V10.5 H42.5 Z" fill="none" stroke="#f0f0f0" stroke-width="1"/>
<path d="M44 4.5 H48 M44 6.5 H48 M44 8.5 H48" stroke="#f0f0f0" stroke-width="0.9"/>
<path d="M77.5 0.5 H90.5 V12.5 H77.5 Z" fill="none" stroke="#f0f0f0" stroke-width="1"/>
<rect x="78" y="1" width="3" height="6" fill="#f0f0f0"/><rect x="82" y="1" width="3" height="6" fill="#f0f0f0"/>
</svg>
<div class="r" style="left:1427px;top:848px;width:6px;height:2px;background:#f0f0f0"></div>
<div class="r" style="left:1437px;top:848px;width:100px;height:1px;background:#d0e0d6"></div>
<div class="r" style="left:1486px;top:843px;width:3px;height:11px;background:#f0f0f0"></div>
<div class="r" style="left:1541px;top:848px;width:8px;height:2px;background:#f0f0f0"></div>
<div class="r" style="left:1544px;top:845px;width:2px;height:8px;background:#f0f0f0"></div>
<div class="t" style="left:1564.00px;top:844.00px;font-size:11.19px;line-height:11.19px;font-weight:normal;color:#f2f7f4;transform:scaleX(0.9258);">100%</div>
<div class="r" style="left:942px;top:189px;width:1px;height:647px;background:#d4d4d4"></div>
<div class="t" style="left:957.20px;top:205.00px;font-size:22.53px;line-height:22.53px;font-weight:normal;color:#2b7550;transform:scaleX(0.8912);-webkit-text-stroke:0.35px #fff;">PivotTable Fields</div>
<svg class="r" style="left:1559px;top:209px" width="11" height="7"><path d="M0.5 0.5 H10 L5.25 6 Z" fill="#777"/></svg>
<svg class="r" style="left:1576px;top:207px" width="12" height="11"><path d="M1 1 L11 10 M11 1 L1 10" stroke="#777" stroke-width="2.4"/></svg>
<div class="t" style="left:955.70px;top:235.00px;font-size:13.52px;line-height:13.52px;font-weight:bold;color:#217346;transform:scaleX(0.7887);">ACTIVE</div>
<div class="r" style="left:1006px;top:232px;width:1px;height:18px;background:#d4d4d4"></div>
<div class="t" style="left:1020.30px;top:235.00px;font-size:13.52px;line-height:13.52px;font-weight:normal;color:#444;transform:scaleX(0.7938);">ALL</div>
<div class="t" style="left:955.70px;top:266.00px;font-size:13.23px;line-height:13.23px;font-weight:normal;color:#444;transform:scaleX(0.8956);">Choose fields to add to report:</div>
<div class="r" style="left:1542px;top:259px;width:44px;height:27px;border:1px solid #c6c6c6;box-sizing:border-box;background:#fff"></div>
<svg class="r" style="left:1551px;top:264px" width="32" height="15" viewBox="0 0 32 15">
<g transform="translate(7.5,7.5)" fill="#9a9a9a">
<circle r="4.6"/>
<rect x="-1.6" y="-7" width="3.2" height="14"/><rect x="-7" y="-1.6" width="14" height="3.2"/>
<rect x="-1.6" y="-7" width="3.2" height="14" transform="rotate(45)"/><rect x="-1.6" y="-7" width="3.2" height="14" transform="rotate(-45)"/>
</g>
<circle cx="7.5" cy="7.5" r="2" fill="#fff"/>
<path d="M23 5.5 H30.5 L26.75 10 Z" fill="#777"/>
</svg>
<div class="r" style="left:953px;top:298px;width:637px;height:215px;background:#fdfdfd"></div>
<svg class="r" style="left:960px;top:303px" width="7" height="8"><path d="M6.5 0.5 V7.5 H0 Z" fill="#666"/></svg>
<svg class="r" style="left:970px;top:298px" width="18" height="17" viewBox="0 0 18 17">
<rect x="1.5" y="1.5" width="12" height="11" fill="#fff" stroke="#777" stroke-width="1"/>
<path d="M1.5 4.5 H13.5 M1.5 7.5 H13.5 M1.5 10.5 H13.5 M5.5 1.5 V12.5" stroke="#999" stroke-width="0.8"/>
<path d="M1.5 1.5 H13.5 V3 H1.5 Z" fill="#777"/>
<path d="M11 9.5 C11 8 17.5 8 17.5 9.5 V15 C17.5 16.5 11 16.5 11 15 Z" fill="#e7c27f"/>
<ellipse cx="14.25" cy="9.5" rx="3.25" ry="1.2" fill="#f2d9a6"/>
</svg>
<div class="t" style="left:990.00px;top:301.00px;font-size:12.35px;line-height:12.35px;font-weight:bold;color:#333;transform:scaleX(0.9312);">Customer</div>
<div class="r" style="left:990px;top:316px;width:13px;height:13px;border:1px solid #ababab;box-sizing:border-box;background:#fff"></div>
<svg class="r" style="left:990px;top:316px" width="13" height="13"><path d="M3 6.5 L5.5 9.5 L10.5 3" fill="none" stroke="#555" stroke-width="1.2"/></svg>
<div class="t" style="left:1009.60px;top:317.00px;font-size:12.79px;line-height:12.79px;font-weight:bold;color:#333;transform:scaleX(0.8742);">No</div>
<div class="r" style="left:990px;top:338px;width:13px;height:13px;border:1px solid #ababab;box-sizing:border-box;background:#fff"></div>
<svg class="r" style="left:990px;top:338px" width="13" height="13"><path d="M3 6.5 L5.5 9.5 L10.5 3" fill="none" stroke="#555" stroke-width="1.2"/></svg>
<div class="t" style="left:1009.60px;top:339.00px;font-size:12.79px;line-height:12.79px;font-weight:bold;color:#333;transform:scaleX(0.9189);">Name</div>
<div class="r" style="left:990px;top:360px;width:13px;height:13px;border:1px solid #ababab;box-sizing:border-box;background:#fff"></div>
<div class="t" style="left:1009.60px;top:361.00px;font-size:12.79px;line-height:12.79px;font-weight:normal;color:#444;transform:scaleX(0.8719);">Address</div>
<div class="r" style="left:990px;top:382px;width:13px;height:13px;border:1px solid #ababab;box-sizing:border-box;background:#fff"></div>
<div class="t" style="left:1009.60px;top:383.00px;font-size:12.79px;line-height:12.79px;font-weight:normal;color:#444;transform:scaleX(0.8570);">Address_2</div>
<div class="r" style="left:990px;top:404px;width:13px;height:13px;border:1px solid #ababab;box-sizing:border-box;background:#fff"></div>
<div class="t" style="left:1009.60px;top:405.00px;font-size:12.79px;line-height:12.79px;font-weight:normal;color:#444;transform:scaleX(0.8802);">Post_Code</div>
<div class="r" style="left:990px;top:426px;width:13px;height:13px;border:1px solid #ababab;box-sizing:border-box;background:#fff"></div>
<div class="t" style="left:1009.60px;top:427.00px;font-size:12.79px;line-height:12.79px;font-weight:normal;color:#444;transform:scaleX(0.9259);">City</div>
<div class="r" style="left:990px;top:448px;width:13px;height:13px;border:1px solid #ababab;box-sizing:border-box;background:#fff"></div>
<div class="t" style="left:1009.60px;top:449.00px;font-size:12.79px;line-height:12.79px;font-weight:normal;color:#444;transform:scaleX(0.9053);">Country_Region_Code</div>
<div class="r" style="left:990px;top:470px;width:13px;height:13px;border:1px solid #ababab;box-sizing:border-box;background:#fff"></div>
<div class="t" style="left:1009.60px;top:471.00px;font-size:12.79px;line-height:12.79px;font-weight:normal;color:#444;transform:scaleX(0.8951);">Phone_No</div>
<div class="r" style="left:990px;top:492px;width:13px;height:13px;border:1px solid #ababab;box-sizing:border-box;background:#fff"></div>
<div class="t" style="left:1009.60px;top:493.00px;font-size:12.79px;line-height:12.79px;font-weight:normal;color:#444;transform:scaleX(0.9121);">Primary_Contact_No</div>
<div class="r" style="left:1570px;top:301px;width:15px;height:210px;background:#f0f0f0"></div>
<div class="r" style="left:1570px;top:301px;width:15px;height:15px;border:1px solid #c6c6c6;box-sizing:border-box;background:#fff"></div>
<svg class="r" style="left:1573px;top:306px" width="9" height="5"><path d="M0 4.5 H8 L4 0 Z" fill="#777"/></svg>
<div class="r" style="left:1570px;top:315px;width:15px;height:28px;border:1px solid #c6c6c6;box-sizing:border-box;background:#fff"></div>
<div class="r" style="left:1570px;top:496px;width:15px;height:15px;border:1px solid #c6c6c6;box-sizing:border-box;background:#fff"></div>
<svg class="r" style="left:1573px;top:501px" width="9" height="5"><path d="M0 0 H8 L4 4.5 Z" fill="#777"/></svg>
<div class="r" style="left:956px;top:529px;width:634px;height:1px;background-image:linear-gradient(90deg,#bbb 50%,transparent 50%);background-size:4px 1px"></div>
<div class="t" style="left:958.50px;top:536.00px;font-size:13.37px;line-height:13.37px;font-weight:normal;color:#444;transform:scaleX(0.8627);">Drag fields between areas below:</div>
<div class="r" style="left:957px;top:585px;width:308px;height:84px;background:#fdfdfd"></div>
<div class="r" style="left:1276px;top:585px;width:311px;height:86px;background:#fdfdfd"></div>
<div class="r" style="left:957px;top:697px;width:308px;height:88px;background:#fdfdfd"></div>
<div class="r" style="left:1276px;top:697px;width:311px;height:88px;background:#fdfdfd"></div>
<div class="r" style="left:1271px;top:566px;width:1px;height:220px;background:#c6c6c6"></div>
<div class="r" style="left:957px;top:675px;width:630px;height:1px;background:#c6c6c6"></div>
<svg class="r" style="left:960px;top:568px" width="12" height="12"><path d="M0.5 0.5 H11.5 L7.5 5 V11.5 H4.5 V5 Z" fill="#777"/></svg>
<div class="t" style="left:980.40px;top:569.00px;font-size:12.94px;line-height:12.94px;font-weight:normal;color:#444;transform:scaleX(0.7716);">FILTERS</div>
<div class="r" style="left:1279px;top:569px;width:2px;height:10px;background:#7a7a7a"></div>
<div class="r" style="left:1282px;top:569px;width:1px;height:10px;background:#9a9a9a"></div>
<div class="r" style="left:1284px;top:569px;width:1px;height:10px;background:#9a9a9a"></div>
<div class="r" style="left:1286px;top:569px;width:1px;height:10px;background:#9a9a9a"></div>
<div class="t" style="left:1297.70px;top:569.00px;font-size:12.94px;line-height:12.94px;font-weight:normal;color:#444;transform:scaleX(0.8720);">COLUMNS</div>
<svg class="r" style="left:962px;top:685px" width="10" height="9"><path d="M0 0.5 H10 M0 2.5 H10 M0 4.5 H10 M0 6.5 H10 M0 8.5 H10" stroke="#888" stroke-width="1"/></svg>
<div class="t" style="left:980.40px;top:684.00px;font-size:13.23px;line-height:13.23px;font-weight:normal;color:#444;transform:scaleX(0.7901);">ROWS</div>
<svg class="r" style="left:1278px;top:684px" width="11" height="11" viewBox="1278 684 11 11"><path d="M1287.8 686.6 V685 H1279.6 L1283.6 689.5 L1279.6 694 H1288 V692.3" fill="none" stroke="#808080" stroke-width="1.1"/></svg>
<div class="t" style="left:1297.70px;top:684.00px;font-size:13.23px;line-height:13.23px;font-weight:normal;color:#444;transform:scaleX(0.7965);">VALUES</div>
<div class="r" style="left:958px;top:704px;width:306px;height:19px;border:1px solid #ababab;box-sizing:border-box;background:#fff"></div>
<div class="t" style="left:965.40px;top:708.00px;font-size:12.94px;line-height:12.94px;font-weight:normal;color:#333;transform:scaleX(0.9009);">Location_Code</div>
<svg class="r" style="left:1247px;top:711px" width="8" height="5"><path d="M0 0 H7.5 L3.75 4.5 Z" fill="#222"/></svg>
<div class="r" style="left:958px;top:725px;width:306px;height:19px;border:1px solid #ababab;box-sizing:border-box;background:#fff"></div>
<div class="t" style="left:965.40px;top:729.00px;font-size:12.94px;line-height:12.94px;font-weight:normal;color:#333;transform:scaleX(0.9379);">No</div>
<svg class="r" style="left:1247px;top:732px" width="8" height="5"><path d="M0 0 H7.5 L3.75 4.5 Z" fill="#222"/></svg>
<div class="r" style="left:958px;top:746px;width:306px;height:19px;border:1px solid #ababab;box-sizing:border-box;background:#fff"></div>
<div class="t" style="left:965.40px;top:750.00px;font-size:12.94px;line-height:12.94px;font-weight:normal;color:#333;transform:scaleX(0.9157);">Name</div>
<svg class="r" style="left:1247px;top:753px" width="8" height="5"><path d="M0 0 H7.5 L3.75 4.5 Z" fill="#222"/></svg>
<div class="r" style="left:1275px;top:704px;width:311px;height:19px;border:1px solid #ababab;box-sizing:border-box;background:#fff"></div>
<div class="t" style="left:1282.70px;top:708.00px;font-size:12.94px;line-height:12.94px;font-weight:normal;color:#333;transform:scaleX(0.8650);">Sum of Balance_LCY</div>
<svg class="r" style="left:1568px;top:711px" width="8" height="5"><path d="M0 0 H7.5 L3.75 4.5 Z" fill="#222"/></svg>
<div class="r" style="left:957px;top:810px;width:13px;height:13px;border:1px solid #ababab;box-sizing:border-box;background:#fff"></div>
<div class="t" style="left:976.50px;top:810.00px;font-size:13.08px;line-height:13.08px;font-weight:normal;color:#444;transform:scaleX(0.8906);">Defer Layout Update</div>
<div class="r" style="left:1533px;top:805px;width:54px;height:23px;border:1px solid #d8d8d8;box-sizing:border-box;background:#fff"></div>
<div class="t" style="left:1538.20px;top:810.00px;font-size:14.10px;line-height:14.10px;font-weight:normal;color:#bbb;transform:scaleX(0.7712);">UPDATE</div>
</body></html>
